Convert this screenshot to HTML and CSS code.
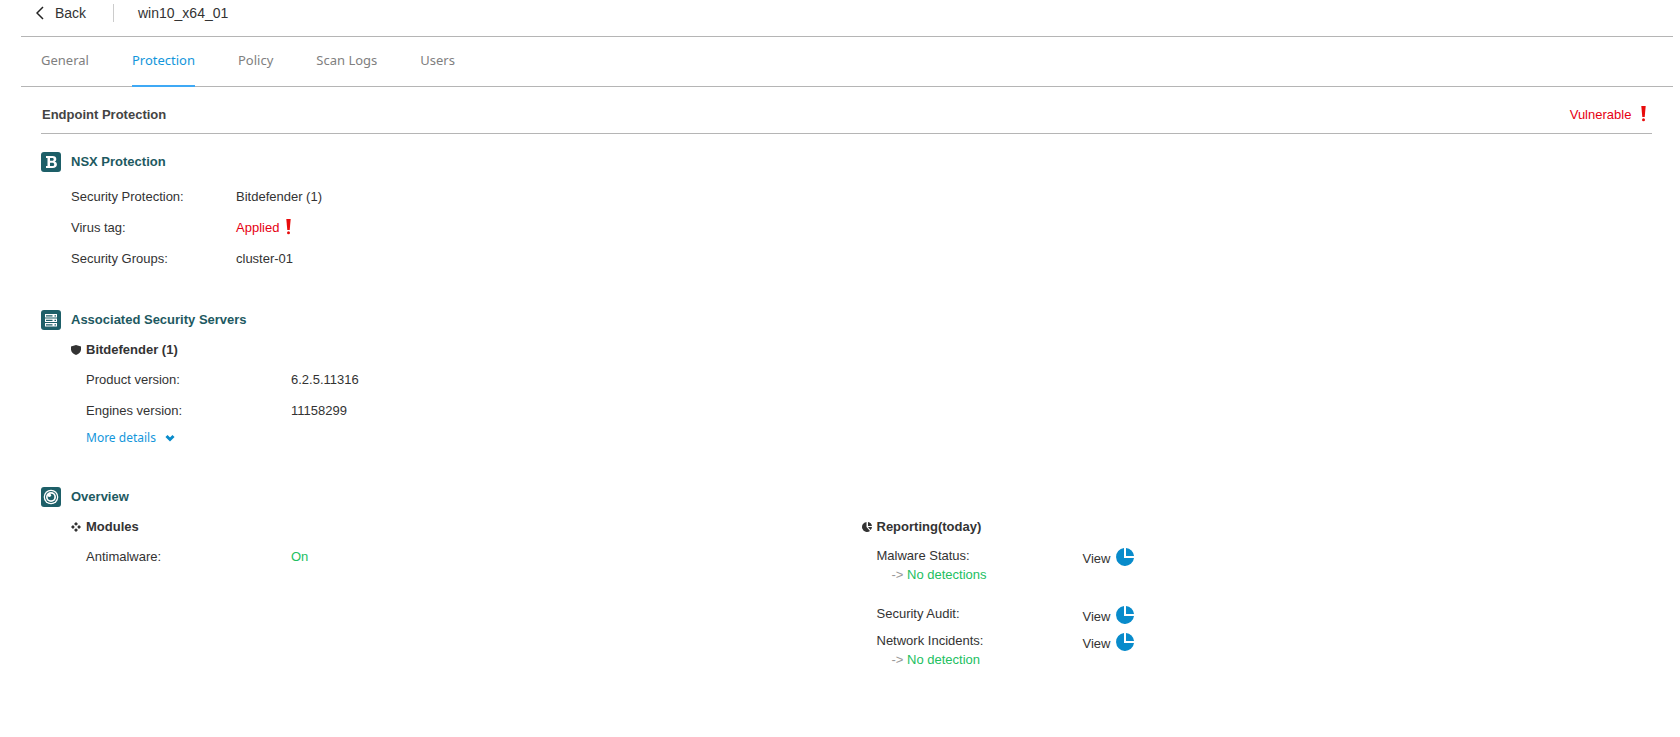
FILE: index.html
```html
<!DOCTYPE html>
<html lang="en">
<head>
    <meta charset="UTF-8">
    <meta name="viewport" content="width=device-width, initial-scale=1.0">
    <title>win10_x64_01 | Protection</title>
    <link rel="stylesheet" href="styles.css">
</head>
<body>
    <!-- shared icons -->
    <svg class="sprite" aria-hidden="true">
        <symbol id="icon-alert" viewBox="0 0 5 16">
            <path d="M.3 0h4.400L3.700 11H1.300z"/>
            <circle cx="2.500" cy="13.800" r="1.500"/>
        </symbol>
        <symbol id="icon-pie" viewBox="0 0 18 18">
            <path d="M8 0v10h10A9 9 0 1 1 8 0z"/>
            <path d="M10 0a9 9 0 0 1 8 8h-8z"/>
        </symbol>
    </svg>

    <div class="container">
        <header class="header">
            <a href="#" class="back">
                <svg class="back-icon" viewBox="0 0 8 14"><path d="M7 1L1 7l6 6"/></svg>
                Back
            </a>
            <h1>win10_x64_01</h1>
        </header>

        <nav class="tabs">
            <a href="#general">General</a>
            <a href="#protection" class="active">Protection</a>
            <a href="#policy">Policy</a>
            <a href="#scan-logs">Scan Logs</a>
            <a href="#users">Users</a>
        </nav>

        <main id="protection">
            <div class="status-bar">
                <h2>Endpoint Protection</h2>
                <span class="danger">Vulnerable <svg class="alert"><use href="#icon-alert"/></svg></span>
            </div>

            <section class="nsx">
                <h3>
                    <svg class="badge" viewBox="0 0 20 20">
                        <rect width="20" height="20" rx="3"/>
                        <path class="mark" fill-rule="evenodd" d="M5 4h6.500c2.500 0 3.800 1.100 3.800 2.900 0 1.300-.6 2.200-1.700 2.600 1.500.4 2.300 1.500 2.300 3 0 2.300-1.600 3.500-4.300 3.500H5v-2h1.500V6H5zM9 6v2.800h2c1.100 0 1.700-.5 1.700-1.400S12.100 6 11 6zM9 10.800V14h2.300c1.200 0 1.900-.6 1.900-1.600s-.7-1.600-1.900-1.600z"/>
                    </svg>
                    NSX Protection
                </h3>
                <dl class="details">
                    <dt>Security Protection:</dt>
                    <dd>Bitdefender (1)</dd>
                    <dt>Virus tag:</dt>
                    <dd class="danger">Applied <svg class="alert"><use href="#icon-alert"/></svg></dd>
                    <dt>Security Groups:</dt>
                    <dd>cluster-01</dd>
                </dl>
            </section>

            <section class="servers">
                <h3>
                    <svg class="badge" viewBox="0 0 20 20">
                        <rect width="20" height="20" rx="3"/>
                        <path class="mark" d="M4 4h12v3.500H4zM4 8.500h12V12H4zM4 13h12v3.500H4z"/>
                        <path d="M5 5.200h6.500v1.200H5zM5 9.700h6.500v1.200H5zM5 14.200h6.500v1.200H5zM13.500 5.200h1.500v1.200h-1.500zM13.500 9.700h1.500v1.200h-1.500zM13.500 14.200h1.500v1.200h-1.500z"/>
                    </svg>
                    Associated Security Servers
                </h3>
                <div class="group">
                    <h4>
                        <svg class="small-icon" viewBox="0 0 10 10"><path d="M5 0l5 1.500v3C10 7 8 9 5 10 2 9 0 7 0 4.500v-3z"/></svg>
                        Bitdefender (1)
                    </h4>
                    <dl class="details">
                        <dt>Product version:</dt>
                        <dd>6.2.5.11316</dd>
                        <dt>Engines version:</dt>
                        <dd>11158299</dd>
                    </dl>
                    <button type="button" class="more">
                        More details
                        <svg viewBox="0 0 10 8"><path d="M1.500 2L5 5.500 8.500 2"/></svg>
                    </button>
                </div>
            </section>

            <section class="overview">
                <h3>
                    <svg class="badge" viewBox="0 0 20 20">
                        <rect width="20" height="20" rx="3"/>
                        <circle class="mark" cx="10" cy="10" r="7.300"/>
                        <circle cx="10" cy="10" r="6"/>
                        <circle class="mark" cx="10" cy="10" r="5"/>
                        <circle cx="10" cy="10" r="3.300"/>
                        <circle class="mark" cx="8.300" cy="8.300" r="1.800"/>
                    </svg>
                    Overview
                </h3>
                <div class="columns">
                    <div class="group">
                        <h4>
                            <svg class="small-icon" viewBox="0 0 10 10"><path d="M5 0l2 2-2 1.800L3 2zM5 6.200L7 8l-2 2-2-2zM2 3l1.800 2L2 7 0 5zM8 3l2 2-2 2-1.800-2z"/></svg>
                            Modules
                        </h4>
                        <dl class="details">
                            <dt>Antimalware:</dt>
                            <dd class="ok">On</dd>
                        </dl>
                    </div>
                    <div class="group">
                        <h4>
                            <svg class="small-icon" viewBox="0 0 10 10"><path d="M4.500 0v5l3.500 4A5 5 0 1 1 4.500 0zM6 0a5 5 0 0 1 4 4H6zM6 5h4a5 5 0 0 1-1.500 3z"/></svg>
                            Reporting(today)
                        </h4>
                        <ul class="reports">
                            <li class="spaced">
                                <div>
                                    Malware Status:
                                    <p>-&gt; <span class="ok">No detections</span></p>
                                </div>
                                <a href="#malware">View <svg><use href="#icon-pie"/></svg></a>
                            </li>
                            <li>
                                <div>Security Audit:</div>
                                <a href="#audit">View <svg><use href="#icon-pie"/></svg></a>
                            </li>
                            <li>
                                <div>
                                    Network Incidents:
                                    <p>-&gt; <span class="ok">No detection</span></p>
                                </div>
                                <a href="#network">View <svg><use href="#icon-pie"/></svg></a>
                            </li>
                        </ul>
                    </div>
                </div>
            </section>
        </main>
    </div>
</body>
</html>
```
FILE: styles.css
```css
* {
    margin: 0;
    padding: 0;
    box-sizing: border-box;
}

body {
    background: #fff;
    color: #333;
    font-family: 'Liberation Sans', Arial, sans-serif;
    font-size: 13px;
}

a {
    color: inherit;
    text-decoration: none;
}

.sprite {
    display: none;
}

.container {
    margin: 0 7px 0 21px;
}

/* Header */
.header {
    display: flex;
    align-items: center;
    padding-bottom: 10px;
    border-bottom: 1px solid #b5b5b5;
    line-height: 26px;
    font-size: 14px;
}

.header h1 {
    font-size: 14px;
    font-weight: normal;
    line-height: 18px;
    padding-left: 24px;
    border-left: 1px solid #ccc;
}

.back {
    display: flex;
    align-items: center;
    gap: 11px;
    width: 92px;
    padding-left: 15px;
}

.back-icon {
    width: 8px;
    height: 14px;
    fill: none;
    stroke: #222;
    stroke-width: 1.5;
}

/* Tabs */
.tabs {
    display: flex;
    gap: 43px;
    padding-left: 20px;
    border-bottom: 1px solid #b5b5b5;
    font-family: 'Noto Sans', sans-serif;
    color: #808080;
}

.tabs a {
    line-height: 46px;
    padding-bottom: 2px;
    margin-bottom: -1px;
    border-bottom: 2px solid transparent;
}

.tabs .active {
    color: #1296db;
    border-color: #3fa9f5;
}

main {
    padding: 0 21px 20px 20px;
}

.status-bar {
    display: flex;
    justify-content: space-between;
    padding: 10px 6px 0 1px;
    border-bottom: 1px solid #b5b5b5;
    line-height: 36px;
}

h2, h3, h4 {
    font-size: 13px;
}

.status-bar h2 {
    color: #444;
}

.status-bar .alert {
    margin-left: 6px;
}

.danger {
    color: #e60012;
}

.ok {
    color: #22c05f;
}

.alert {
    width: 5px;
    height: 16px;
    margin: -4px 0 0 3px;
    vertical-align: middle;
    fill: #e80c0c;
}

/* Sections */
.nsx {
    padding-top: 18px;
}

.servers {
    padding-top: 36px;
}

.overview {
    padding-top: 39px;
}

h3 {
    display: flex;
    gap: 10px;
    line-height: 20px;
    color: #1d5961;
}

.badge {
    width: 20px;
    height: 20px;
    fill: #1d5f68;
}

.badge .mark {
    fill: #fff;
}

h4 {
    display: flex;
    align-items: center;
    gap: 5px;
    line-height: 20px;
    margin: 10px 0 4px -15px;
}

.small-icon {
    width: 10px;
    height: 10px;
    fill: #333;
}

.details {
    display: grid;
    grid-template-columns: 205px 1fr;
    line-height: 31px;
}

.nsx .details {
    grid-template-columns: 165px 1fr;
    margin: 9px 0 0 30px;
}

.group {
    padding-left: 45px;
}

.more {
    display: flex;
    align-items: center;
    gap: 9px;
    margin-top: 2px;
    border: none;
    background: none;
    color: #1296db;
    font-family: 'Noto Sans', sans-serif;
    font-size: 12px;
    line-height: 20px;
    cursor: pointer;
}

.more svg {
    width: 10px;
    height: 8px;
    fill: none;
    stroke: #088bcb;
    stroke-width: 3;
}

.columns {
    display: grid;
    grid-template-columns: 1fr 1fr;
    padding-left: 30px;
}

.columns .group {
    padding-left: 15px;
}

/* Reports */
.reports {
    list-style: none;
    padding-top: 5px;
    line-height: 19px;
}

.reports li {
    display: grid;
    grid-template-columns: 206px auto;
    justify-content: start;
    align-items: start;
    margin-bottom: 4px;
}

.reports .spaced {
    margin-bottom: 20px;
}

.reports p {
    padding-left: 15px;
    color: #999;
}

.reports a {
    display: flex;
    gap: 6px;
    padding-top: 2px;
    line-height: 21px;
}

.reports svg {
    width: 18px;
    height: 18px;
    fill: #088bcb;
}
```
